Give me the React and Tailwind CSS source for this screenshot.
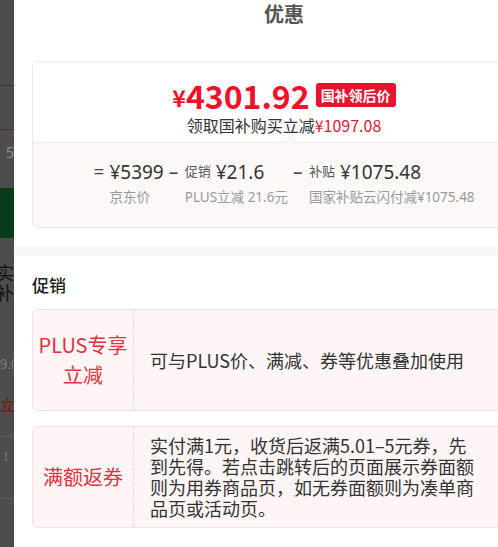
import React from 'react';

const breakdown = [
    { sign: '=', label: '', amount: '¥5399', note: '京东价' },
    { sign: '–', label: '促销', amount: '¥21.6', note: 'PLUS立减 21.6元' },
    { sign: '–', label: '补贴', amount: '¥1075.48', note: '国家补贴云闪付减¥1075.48' },
];

const promos = [
    { tag: ['PLUS专享', '立减'], text: '可与PLUS价、满减、券等优惠叠加使用' },
    { tag: ['满额返券'], text: '实付满1元，收货后返满5.01–5元券，先到先得。若点击跳转后的页面展示券面额则为用券商品页，如无券面额则为凑单商品页或活动页。' },
];

// the dimmed page behind the sheet, only a sliver shows
function BackdropStrip() {
    return (
        <div className="w-[14px] shrink-0 overflow-hidden bg-[#4d4d4d] flex flex-col">
            <div className="h-[85px] shrink-0" />
            <div className="h-px shrink-0 bg-[#6b2328]" />
            <div className="h-[43px] shrink-0" />
            <div className="h-px shrink-0 bg-[#6b2328]" />
            <div className="h-[15px] shrink-0" />
            <div className="h-[14px] shrink-0 flex justify-end text-[15px] leading-[14px] text-[#8a8a8a] whitespace-nowrap">5</div>
            <div className="h-[29px] shrink-0" />
            <div className="h-[50px] shrink-0 bg-[#093c1a]" />
            <div className="h-[24px] shrink-0" />
            <div className="h-[20px] shrink-0 flex justify-end text-[18px] leading-[20px] text-[#111] whitespace-nowrap"><span className="shrink-0">实</span></div>
            <div className="h-[20px] shrink-0 flex justify-end text-[18px] leading-[20px] text-[#111] whitespace-nowrap"><span className="shrink-0">补</span></div>
            <div className="h-[55px] shrink-0" />
            <div className="text-[13px] leading-[14px] text-[#7a7a7a] whitespace-nowrap">9.0</div>
            <div className="h-[25px] shrink-0" />
            <div className="text-[15px] leading-[18px] font-bold text-[#7c1c24] whitespace-nowrap">立</div>
            <div className="h-[22px] shrink-0" />
            <div className="h-px shrink-0 bg-[#5c5c5c]" />
            <div className="h-[12px] shrink-0" />
            <div className="pl-[4px] text-[12px] leading-[14px] text-[#8a8a8a]">!</div>
            <div className="h-[35px] shrink-0" />
            <div className="h-px shrink-0 bg-[#5c5c5c]" />
        </div>
    );
}

function PriceCard() {
    return (
        <div className="mt-[33px] mx-[18px] rounded-[6px] border border-[#f3e4e6] overflow-hidden">
            <div className="pt-[16px] pb-[7px] flex flex-col items-center">
                <div className="h-[34px] flex items-end">
                    <span className="text-[23px] font-bold text-[#f2102b] leading-[30px]">¥</span>
                    <span className="text-[32px] font-bold text-[#f2102b] leading-[34px]">4301.92</span>
                    <span className="ml-[6px] mb-[5px] h-[24px] px-[5px] rounded-[3px] bg-[#e8142e] text-white text-[14px] font-bold leading-[24px]">国补领后价</span>
                </div>
                <div className="mt-[3px] text-[16px] leading-[20px] text-[#333]">
                    领取国补购买立减<span className="text-[#e4182e]">¥1097.08</span>
                </div>
            </div>
            <div className="relative border-t border-[#f5e7e9] bg-[#fdf8f8] pt-[16px] pb-[21px] flex justify-center gap-[5px] font-['Noto_Sans','Noto_Sans_CJK_SC',sans-serif]">
                <div className="absolute left-[254px] top-[-5px] w-[8px] h-[8px] rotate-45 bg-[#fdf8f8] border-l border-t border-[#f5e7e9]" />
                {breakdown.map((b, i) => (
                    <div key={i} className="flex">
                        <div className="w-[16px] text-[19px] leading-[26px] text-[#444]">{b.sign}</div>
                        <div className="flex flex-col">
                            <div className="flex items-center h-[26px] text-[#333]">
                                {b.label && <span className="mr-[5px] text-[13px] text-[#555]">{b.label}</span>}
                                <span className="text-[19px]">{b.amount}</span>
                            </div>
                            <div className="mt-[3px] text-[13.5px] leading-[18px] text-[#999] whitespace-nowrap">{b.note}</div>
                        </div>
                    </div>
                ))}
            </div>
        </div>
    );
}

export default function App() {
    return (
        <div className="flex w-[498px] h-[547px] overflow-hidden font-['Noto_Sans_CJK_SC','Noto_Sans',sans-serif]">
            <BackdropStrip />
            <div className="w-[540px] shrink-0 bg-white flex flex-col">
                <div className="h-[28px] flex items-center justify-center text-[20px] font-bold text-[#555]">优惠</div>
                <PriceCard />
                <div className="mt-[18px] h-[10px] bg-[#f7f8fa]" />
                <div className="px-[18px]">
                    <div className="pt-[16px] mb-[12px] text-[17px] leading-[25px] font-medium text-[#222]">促销</div>
                    <div className="flex flex-col gap-[15px]">
                        {promos.map((p, i) => (
                            <div key={i} className="h-[102px] flex rounded-[6px] border border-[#f3e1e3] bg-[#fdf5f6]">
                                <div className="w-[101px] shrink-0 border-r border-dashed border-[#ebd3d6] flex flex-col items-center justify-center text-[20px] leading-[30px] text-[#e5303f]">
                                    {p.tag.map((t) => <div key={t}>{t}</div>)}
                                </div>
                                <div className="flex items-center pl-[16px]">
                                    <div className="max-w-[330px] text-[18px] leading-[21px] text-[#333]">{p.text}</div>
                                </div>
                            </div>
                        ))}
                    </div>
                </div>
            </div>
        </div>
    );
}
